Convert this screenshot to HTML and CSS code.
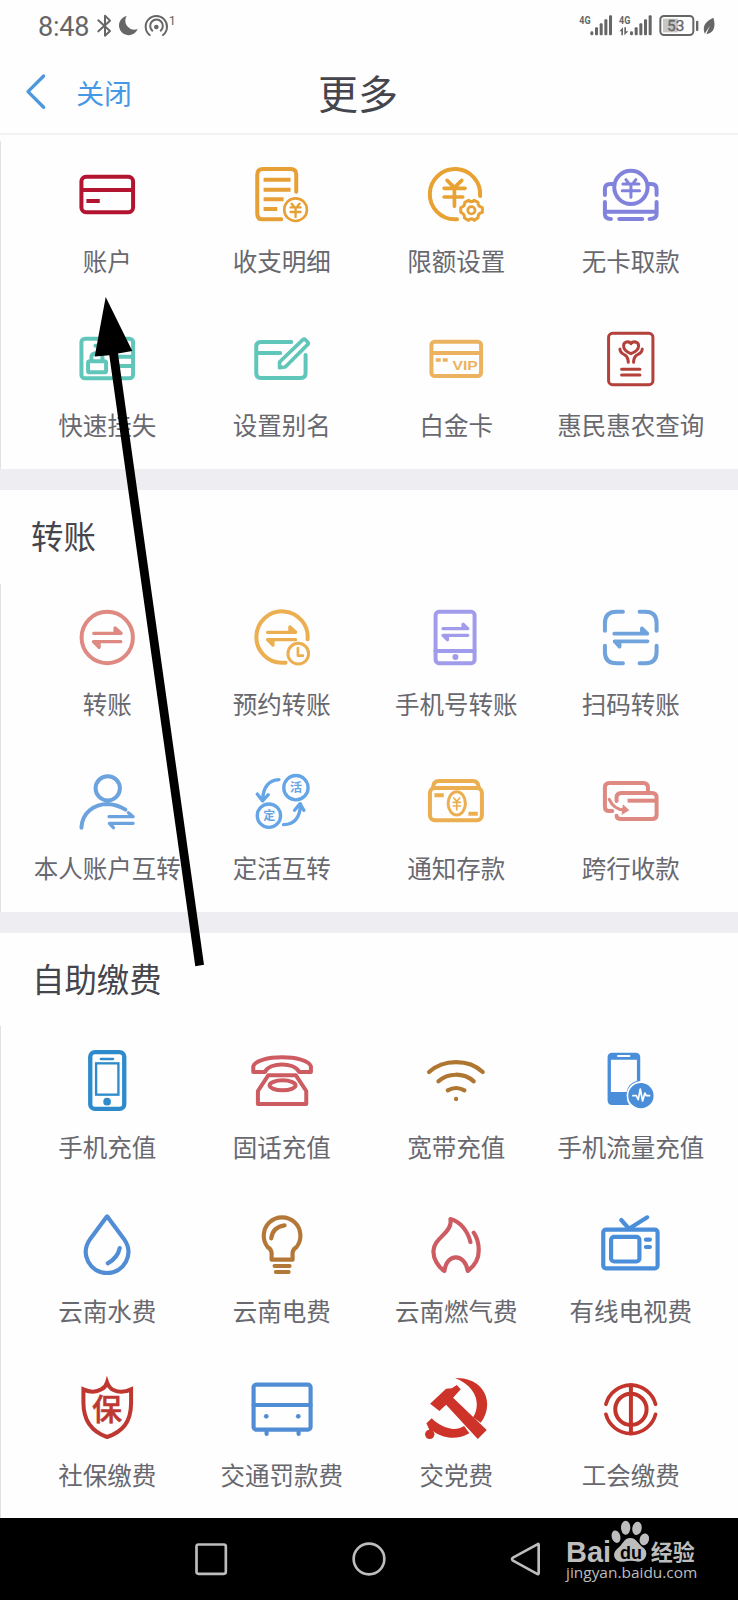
FILE: index.html
```html
<!DOCTYPE html>
<html lang="zh-CN">
<head>
<meta charset="utf-8">
<title>更多</title>
<link rel="stylesheet" href="styles.css">
</head>
<body>
<div class="screen">
  <div class="status-bar">
    <span class="clock">8:48</span>
    <svg class="status-left" viewBox="285 30 255 90">
      <g class="line s-grey" stroke-width="6">
        <path d="M295 61L330 93L315 107V47L330 62L295 94"/>
        <path d="M449 105A32 32 0 1 1 489 105" stroke-width="6"/>
        <path d="M457 92A19 19 0 1 1 482 92" stroke-width="6"/>
      </g>
      <path class="f-grey" d="M380 48A29 29 0 1 0 413 87A27 27 0 0 1 380 48Z"/>
      <circle class="f-grey" cx="469" cy="81" r="7"/>
      <text class="f-grey roboto" x="506" y="74" font-size="38">1</text>
    </svg>
    <svg class="status-right" viewBox="620 30 425 90">
      <g class="f-grey">
        <text class="roboto bold" x="630" y="72" font-size="34" textLength="34" lengthAdjust="spacingAndGlyphs">4G</text>
        <text class="roboto bold" x="749" y="72" font-size="34" textLength="34" lengthAdjust="spacingAndGlyphs">4G</text>
        <rect x="663" y="94" width="9" height="12" rx="4"/><rect x="677" y="82" width="9" height="24" rx="3"/><rect x="691" y="70" width="9" height="36" rx="3"/><rect x="705" y="58" width="9" height="48" rx="3"/><rect x="719" y="46" width="9" height="60" rx="3"/>
        <rect x="782" y="94" width="9" height="12" rx="4"/><rect x="796" y="82" width="9" height="24" rx="3"/><rect x="810" y="70" width="9" height="36" rx="3"/><rect x="824" y="58" width="9" height="48" rx="3"/><rect x="838" y="46" width="9" height="60" rx="3"/>
        <path d="M750 94L761 82V106H756V94ZM765 82H770V94H777L765 106Z"/>
        <path d="M1032 53C1040 76 1035 100 1011 102L1022 77L1006 101C998 78 1008 64 1032 53Z"/>
        <rect x="980" y="62" width="7" height="31" rx="3"/>
      </g>
      <rect x="881" y="56" width="45" height="41" fill="#c6c6c6"/>
      <rect class="line s-grey" x="873" y="48" width="99" height="57" rx="11" stroke-width="6"/>
      <text class="f-grey roboto" x="893" y="94" font-size="46" stroke="#666" stroke-width="1" textLength="52" lengthAdjust="spacingAndGlyphs">53</text>
    </svg>
  </div>
  <header class="title-bar">
    <div class="close">
      <svg class="chevron" viewBox="75 220 64 112"><path class="line s-blue" stroke-width="10" d="M131 229L84 276L131 323"/></svg>
      <span>关闭</span>
    </div>
    <h1>更多</h1>
  </header>

  <section class="section section-first">
    <div class="grid">
      <div class="cell"><svg viewBox="213.75 72 216 216"><g class="line" stroke="#b31430" stroke-width="12"><rect x="245" y="125.500" width="155" height="106" rx="14"/><path stroke-linecap="butt" d="M245 165H400M260 198H300"/></g></svg><span>账户</span></div>
      <div class="cell"><svg viewBox="737.25 72 216 216"><g class="line" stroke="#e6a035" stroke-width="12"><path d="M888 170V119Q888 102 872 102H788Q771 102 771 119V236Q771 253 788 253H843"/><circle cx="886" cy="224" r="34" stroke-width="8"/><path stroke-width="7" d="M874 206L880 213M898 206L892 213M871 217H901M871 231H901M886 217V246"/><path stroke-linecap="butt" d="M790 134H871M790 164H871M790 193H850M790 222H831"/></g></svg><span>收支明细</span></div>
      <div class="cell"><svg viewBox="153.75 72 216 216"><g class="line" stroke="#e8a133" stroke-width="12"><path d="M334 183A75.500 75.500 0 1 0 258 253H265"/><path d="M235 136L257 158L279 136M226 160H289M226 186H282M257 160V214" stroke-width="11"/><path stroke-width="9" d="M300 196Q308 204 316 196L328 202Q326 214 341 218V232Q327 235 328 248L317 256Q308 247 299 256L287 249Q289 237 276 232V218Q289 214 288 202Z"/><circle cx="308" cy="226" r="11" stroke-width="8"/></g></svg><span>限额设置</span></div>
      <div class="cell"><svg viewBox="677.25 72 216 216"><g class="line" stroke="#8182dc" stroke-width="12"><circle cx="785" cy="157" r="50"/><path d="M707 180V162Q707 147 723 147H732M837 147H846Q862 147 862 162V180M707 201V238Q707 252 725 252M862 201V238Q862 252 841 252M750 252H819"/><path stroke-linecap="butt" d="M707 230H862"/><path d="M770 134L777 143M800 134L793 143M761 147H809M759 167H811M785 147V187" stroke-width="9"/></g></svg><span>无卡取款</span></div>

      <div class="cell"><svg viewBox="213.75 564 216 216"><g class="line" stroke="#61c6ba" stroke-width="12"><rect x="245" y="611" width="155" height="119" rx="11"/><path d="M287 632H330M350 665H399M350 693H399"/><rect x="265" y="679" width="54" height="33" rx="5"/><path d="M275 675V666Q275 655 292 655Q308 655 308 666V675"/></g></svg><span>快速挂失</span></div>
      <div class="cell"><svg viewBox="737.25 564 216 216"><g class="line" stroke="#61c6ba" stroke-width="12"><path d="M873 621H782Q768 621 768 635V715Q768 729 782 729H902Q916 729 916 715V660M768 654H840"/><path stroke-width="11" d="M838 698V681L908 614Q912 611 916 615L922 621Q926 625 922 629L855 696Z"/></g></svg><span>设置别名</span></div>
      <div class="cell"><svg viewBox="153.75 564 216 216"><g class="line" stroke="#ebb35f" stroke-width="12"><rect x="188" y="620" width="149" height="103" rx="10"/><path stroke-linecap="butt" d="M188 654H337"/><path stroke-linecap="butt" stroke-width="10" d="M201 675H216M222 675H237"/></g><text class="vip" x="251" y="706" textLength="76" lengthAdjust="spacingAndGlyphs">VIP</text></svg><span>白金卡</span></div>
      <div class="cell"><svg viewBox="677.25 564 216 216"><g class="line" stroke="#b3403b" stroke-width="9"><rect x="718" y="595" width="133" height="154" rx="12"/><path d="M785 656Q763 647 763 632C763 620 779 617 785 626C791 617 808 620 808 632Q808 647 785 656ZM752 642Q752 653 767 660Q777 667 777 682M819 642Q819 653 803 660Q793 667 793 682M757 703H812M757 720H812"/></g></svg><span>惠民惠农查询</span></div>
    </div>
  </section>

  <section class="section">
    <h2>转账</h2>
    <div class="grid">
      <div class="cell"><svg viewBox="213.75 351 216 216"><g class="line" stroke="#de8981" stroke-width="12"><circle cx="322.500" cy="457.500" r="77"/><path d="M282 445H364L346 429V445M363 470H281L298 487V470" stroke-width="10"/></g></svg><span>转账</span></div>
      <div class="cell"><svg viewBox="737.25 351 216 216"><g class="line" stroke="#ebae50" stroke-width="12"><path d="M922 463A77 77 0 1 0 845 533H856"/><path stroke-width="10" d="M802 442H886L869 426V442M886 464H802L818 480V464"/><circle cx="894" cy="506" r="31" stroke-width="9"/><path stroke-width="8" d="M893 489V512H908"/></g></svg><span>预约转账</span></div>
      <div class="cell"><svg viewBox="153.75 36 216 216"><g class="line" stroke="#a09ceb" stroke-width="12"><rect x="200.500" y="65.500" width="117" height="154" rx="10"/><path d="M200 183H317"/><path stroke-width="10" d="M223 116H297L283 103V116M297 136H223L236 149V136"/></g><circle cx="260" cy="201" r="9" fill="#a09ceb"/></svg><span>手机号转账</span></div>
      <div class="cell"><svg viewBox="677.25 36 216 216"><g class="line" stroke="#70a2dc" stroke-width="12"><path d="M761 65H742Q707 65 707 99V122M811 65H828Q862 65 862 99V122M707 167V187Q707 220 742 220H761M862 167V187Q862 220 828 220H811"/><path d="M735 131H834L818 115V131M835 154H736L751 170V154" stroke-width="11"/></g></svg><span>扫码转账</span></div>

      <div class="cell"><svg viewBox="213.75 123 216 216"><g class="line" stroke="#6ca3df" stroke-width="12"><circle cx="324" cy="190" r="36.500"/><path d="M245 308C247 264 283 237 324 237Q354 239 377 254"/><path d="M328 275H400L386 263M400 295H329L341 308" stroke-width="10"/></g></svg><span>本人账户互转</span></div>
      <div class="cell"><svg viewBox="737.25 123 216 216"><g class="line" stroke="#65a5e6" stroke-width="10"><circle cx="887" cy="188" r="36.500"/><circle cx="806" cy="272" r="35"/><path d="M836 164Q789 167 787 226M771 207L787 228L804 209M850 299Q899 298 901 237M883 256L899 236L911 256"/></g><text class="coin" x="887" y="202">活</text><text class="coin" x="807" y="286">定</text></svg><span>定活互转</span></div>
      <div class="cell"><svg viewBox="153.75 528 216 216"><g class="line" stroke="#ebae50" stroke-width="12"><rect x="183.500" y="594" width="156" height="97" rx="15"/><path d="M193 591Q194 573 211 573H312Q328 573 330 591"/><ellipse cx="264" cy="640" rx="26" ry="35" stroke-width="9"/><path stroke-width="5" d="M255 624L264 634L273 624M253 637H275M253 648H275M264 635V660"/><path stroke-linecap="butt" stroke-width="12" d="M197 616H225M299 671H327"/></g></svg><span>通知存款</span></div>
      <div class="cell"><svg viewBox="677.25 528 216 216"><g class="line" stroke="#de8981" stroke-width="12"><path d="M836 605V593Q836 579 822 579H721Q707 579 707 593V650Q707 663 720 663H729M742 633V623Q742 609 756 609H848Q862 609 862 623V675Q862 687 848 687H756Q742 687 742 677"/><path stroke-linecap="butt" d="M775 632H862"/><path stroke-width="9" d="M720 628Q733 658 765 660"/></g><path fill="#de8981" d="M761 643L780 661L757 675Z"/></svg><span>跨行收款</span></div>
    </div>
  </section>

  <section class="section section-bills">
    <h2>自助缴费</h2>
    <div class="grid">
      <div class="cell"><svg viewBox="213.75 72 216 216"><g class="line" stroke="#2d8bcb" stroke-width="13"><rect x="271.500" y="96.500" width="102" height="170" rx="14"/><rect x="289" y="130" width="67" height="94" rx="0" stroke-width="7" stroke-linejoin="miter"/><path d="M303 117H340" stroke-width="7"/></g><circle cx="322" cy="245" r="11.500" fill="#2d8bcb"/></svg><span>手机充值</span></div>
      <div class="cell"><svg viewBox="737.25 72 216 216"><g class="line" stroke="#cc5c61" stroke-width="12"><path d="M759 156V139C770 103 921 103 932 139V156H897C881 126 809 126 794 156Z"/><path d="M804 166L773 213V252H918V213L887 166Z"/><ellipse cx="847" cy="196" rx="39" ry="15"/></g></svg><span>固话充值</span></div>
      <div class="cell"><svg viewBox="153.75 72 216 216"><g class="line" stroke="#ae7631" stroke-width="12.500"><path d="M181 156C224 117 299 116 342 156M209 184C237 158 285 157 315 184M237 211Q262 197 287 211"/></g><circle cx="262" cy="237" r="6.500" fill="#ae7631"/></svg><span>宽带充值</span></div>
      <div class="cell"><svg viewBox="677.25 72 216 216"><path fill="#4a8eda" fill-rule="evenodd" d="M729 98H799Q813 98 813 112V183Q774 190 772 226Q772 243 780 255H729Q715 255 715 241V112Q715 98 729 98ZM725 119V216H772Q776 190 803 182V119ZM744 105V111H783V105Z"/><circle cx="815" cy="227" r="38" fill="#4a8eda"/><path class="line" stroke="#fff" stroke-width="5" d="M791 227H801L807 239L813 207L820 243L827 219L831 227H841"/></svg><span>手机流量充值</span></div>

      <div class="cell"><svg viewBox="213.75 564 216 216"><g class="line" stroke="#518dd5" stroke-width="12.500"><path d="M322 589L272 656C238 704 272 759 322 759C372 759 406 704 372 656Z"/><path d="M360 684Q354 713 324 730"/></g></svg><span>云南水费</span></div>
      <div class="cell"><svg viewBox="737.25 564 216 216"><g class="line" stroke="#b37838" stroke-width="12.500"><path d="M814 719V698Q812 686 803 682A55 55 0 1 1 888 682Q879 686 877 698V719Z"/><path d="M813 655Q816 622 853 616M823 738H868M827 756H865"/></g></svg><span>云南电费</span></div>
      <div class="cell"><svg viewBox="153.75 564 216 216"><g class="line" stroke="#cc5c61" stroke-width="12.500"><path d="M305 666C297 633 274 604 245 597C253 639 195 652 194 693C193 716 209 742 227 753C234 697 289 700 297 753C316 739 330 716 330 691Q330 660 315 638"/></g></svg><span>云南燃气费</span></div>
      <div class="cell"><svg viewBox="677.25 564 216 216"><g class="line" stroke="#4a8eda" stroke-width="12.500"><rect x="702" y="629" width="163" height="116" rx="8"/><rect x="725.500" y="650.500" width="85" height="74" rx="9"/><path d="M756 600L779 626L834 592M830 659H842M830 681H842"/></g></svg><span>有线电视费</span></div>

      <div class="cell"><svg viewBox="213.75 96 216 216"><path fill="none" stroke="#be3730" stroke-width="12" d="M251 148Q281 162 305 148Q318 141 322 127Q328 144 341 150Q365 162 394 148V188C394 247 368 275 322 291C277 275 251 240 251 188Z"/><text class="shield" x="322" y="240">保</text></svg><span>社保缴费</span></div>
      <div class="cell"><svg viewBox="737.25 96 216 216"><g class="line" stroke="#518dd5" stroke-width="12.500"><rect x="760" y="134" width="171" height="135" rx="8"/><path d="M760 195H931M799 276V282M895 276V282"/></g><circle cx="798" cy="229" r="7" fill="#518dd5"/><circle cx="894" cy="229" r="7" fill="#518dd5"/></svg><span>交通罚款费</span></div>
      <div class="cell"><svg viewBox="153.75 96 216 216"><g fill="#ce3329"><path d="M259 114C351 112 378 193 336 248L313 232C335 196 328 142 259 114Z"/><path d="M189 235C219 265 259 276 286 258L302 280C263 303 220 294 194 274L187 281L173 250Z"/><path d="M184 191L232 146L249 145L264 135L276 148L253 173L354 270L327 297L232 194L212 213Z"/><circle cx="183" cy="283" r="14"/></g></svg><span>交党费</span></div>
      <div class="cell"><svg viewBox="677.25 96 216 216"><g class="line" stroke="#c2352c" stroke-width="12"><path stroke-width="11" d="M710 193A77 77 0 0 1 859 193M710 223A77 77 0 0 0 859 223"/><circle cx="785" cy="208" r="47"/><path stroke-linecap="butt" d="M785 130V286"/></g></svg><span>工会缴费</span></div>
    </div>
  </section>

  <nav class="system-nav">
    <svg viewBox="579 603 108 108"><rect class="line s-light" x="589.500" y="613.500" width="88" height="88" rx="6" stroke-width="8"/></svg>
    <svg viewBox="0 0 108 108"><circle class="line s-light" cx="54" cy="54" r="46" stroke-width="8"/></svg>
    <svg viewBox="420 603 108 108"><path class="line s-light" stroke-width="8" d="M505 613Q509 609 509 615V699Q509 705 503 701L432 662Q426 657 432 653Z"/></svg>
  </nav>

  <svg class="watermark" viewBox="580 540 420 200">
    <g fill="#bdbdbd">
      <text class="brand" x="592" y="665" textLength="135" lengthAdjust="spacingAndGlyphs">Bai</text>
      <ellipse cx="742" cy="590" rx="13" ry="19" transform="rotate(-15 742 590)"/>
      <ellipse cx="771" cy="563" rx="14" ry="21"/>
      <ellipse cx="805" cy="565" rx="14" ry="20" transform="rotate(10 805 565)"/>
      <ellipse cx="827" cy="598" rx="14" ry="18" transform="rotate(15 827 598)"/>
      <path d="M785 594C804 594 808 613 825 624C842 639 830 665 809 665Q784 660 765 665C738 669 727 642 745 627C763 614 765 594 785 594Z"/>
      <text class="brand-cn" x="846" y="659" textLength="132" lengthAdjust="spacingAndGlyphs">经验</text>
      <text class="site" x="592" y="713" textLength="394" lengthAdjust="spacingAndGlyphs">jingyan.baidu.com</text>
    </g>
    <text class="du" x="754" y="656" textLength="66" lengthAdjust="spacingAndGlyphs">du</text>
  </svg>

  <svg class="pointer" viewBox="90 290 120 680"><path d="M105.700 297L132.300 351L118 353.600L204 964.700L195.300 966.200L109.300 355.200L94.700 356.500Z"/></svg>
</div>
</body>
</html>
```

FILE: styles.css
```css
* { box-sizing: border-box; }

body {
  margin: 0;
  background: #fefefe;
  font-family: "Noto Sans CJK SC", sans-serif;
  color: #45454d;
}

.screen {
  position: relative;
  display: flex;
  flex-direction: column;
  width: 738px;
  height: 1600px;
  overflow: hidden;
}

svg { display: block; flex: none; }

.line { fill: none; stroke-linecap: round; stroke-linejoin: round; }
.s-grey { stroke: #666; }
.f-grey { fill: #666; }
.s-blue { stroke: #4d98dc; }
.s-light { stroke: #bdbdbd; }
.roboto { font-family: Roboto, sans-serif; }
.bold { font-weight: 700; }

.status-bar {
  display: flex;
  align-items: center;
  height: 50px;
  padding: 0 20px 0 38px;
}

.clock {
  width: 57px;
  font: 27px/50px Roboto, sans-serif;
  padding-top: 4px;
  letter-spacing: -0.2px;
  color: #666;
}

.status-left { width: 85px; height: 30px; }
.status-right { width: 141.700px; height: 30px; margin-left: auto; }

.title-bar {
  display: grid;
  grid-template-columns: 1fr auto 1fr;
  align-items: center;
  height: 85px;
  padding: 0 47px 0 25px;
  border-bottom: 2px solid #f2f2f2;
}

.close {
  display: flex;
  align-items: center;
  gap: 30px;
  font-size: 27.800px;
  line-height: 40px;
  color: #4498e4;
}

.chevron { width: 21.300px; height: 37.300px; }

h1 {
  margin: 0;
  font-size: 40px;
  font-weight: 400;
  line-height: 58px;
}

.section { border-bottom: 21px solid #eeeef2; background: #fefefe; }
.section-first { padding-top: 6px; }
.section-bills { border-bottom: 0; }

h2 {
  height: 94px;
  margin: 0;
  padding-left: 31px;
  font-size: 32.400px;
  font-weight: 400;
  line-height: 90px;
}

.section-bills h2 { height: 93px; padding-left: 32px; }

.grid {
  display: grid;
  grid-template-columns: repeat(4, 1fr);
  grid-auto-rows: 164px;
  padding: 0 20px 0 19px;
  border-left: 1px solid #e2e2e5;
}

.cell {
  display: flex;
  flex-direction: column;
  align-items: center;
  gap: 12px;
  padding-top: 18px;
  font-size: 24.500px;
  line-height: 36px;
  color: #68686f;
  white-space: nowrap;
}

.section-bills .cell { gap: 13px; }

.cell svg { width: 72px; height: 72px; }

.vip { font: 900 38px "Liberation Sans", sans-serif; fill: #ebb35f; }
.coin { font: 700 36px "Noto Sans CJK SC", sans-serif; fill: #65a5e6; text-anchor: middle; }
.shield { font: 500 90px "Noto Sans CJK SC", sans-serif; fill: #be3730; stroke: #be3730; stroke-width: 1.5; text-anchor: middle; }

.system-nav {
  display: flex;
  align-items: center;
  gap: 122px;
  flex: 1;
  padding-left: 193px;
  background: #000;
}

.system-nav svg { width: 36px; height: 36px; }

.watermark {
  position: absolute;
  left: 562.300px;
  top: 1520px;
  width: 140px;
  height: 66.700px;
}

.brand { font: 700 88px "Liberation Sans", sans-serif; }
.brand-cn { font: 700 66px "Noto Sans CJK SC", sans-serif; }
.site { font: 42px "Open Sans", sans-serif; }
.du { font: 700 56px "Liberation Sans", sans-serif; fill: #000; }

.pointer {
  position: absolute;
  left: 90px;
  top: 290px;
  width: 120px;
  height: 680px;
}
```
